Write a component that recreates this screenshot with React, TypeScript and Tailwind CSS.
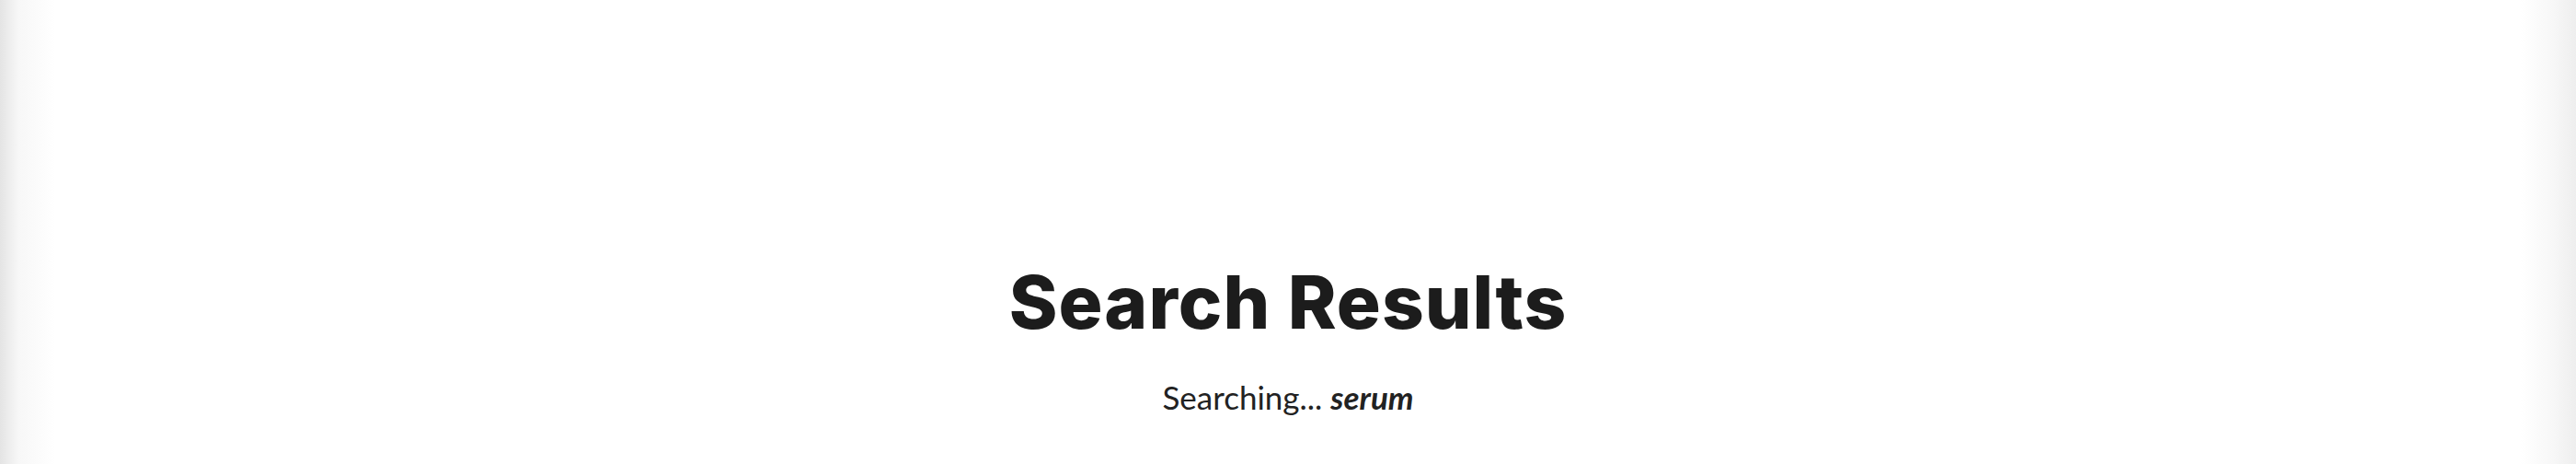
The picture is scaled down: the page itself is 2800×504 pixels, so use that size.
export default function App() {
  return (
    <div className="flex h-[504px] w-full flex-col items-center bg-[linear-gradient(to_right,#e4e4e4_0px,#f7f7f7_20px,#ffffff_60px,#ffffff_calc(100%-60px),#f7f7f7_calc(100%-25px),#eeeeee_100%)] pt-[278px] text-[#1c1c1c]">
      <h1 className="font-['Inter',sans-serif] text-[80px] leading-[100px] font-extrabold tracking-[1px]">
        Search Results
      </h1>
      <p className="mt-[33px] font-['Lato',sans-serif] text-[35px] leading-[40px] text-[#222]">
        Searching... <em className="font-bold">serum</em>
      </p>
    </div>
  )
}
